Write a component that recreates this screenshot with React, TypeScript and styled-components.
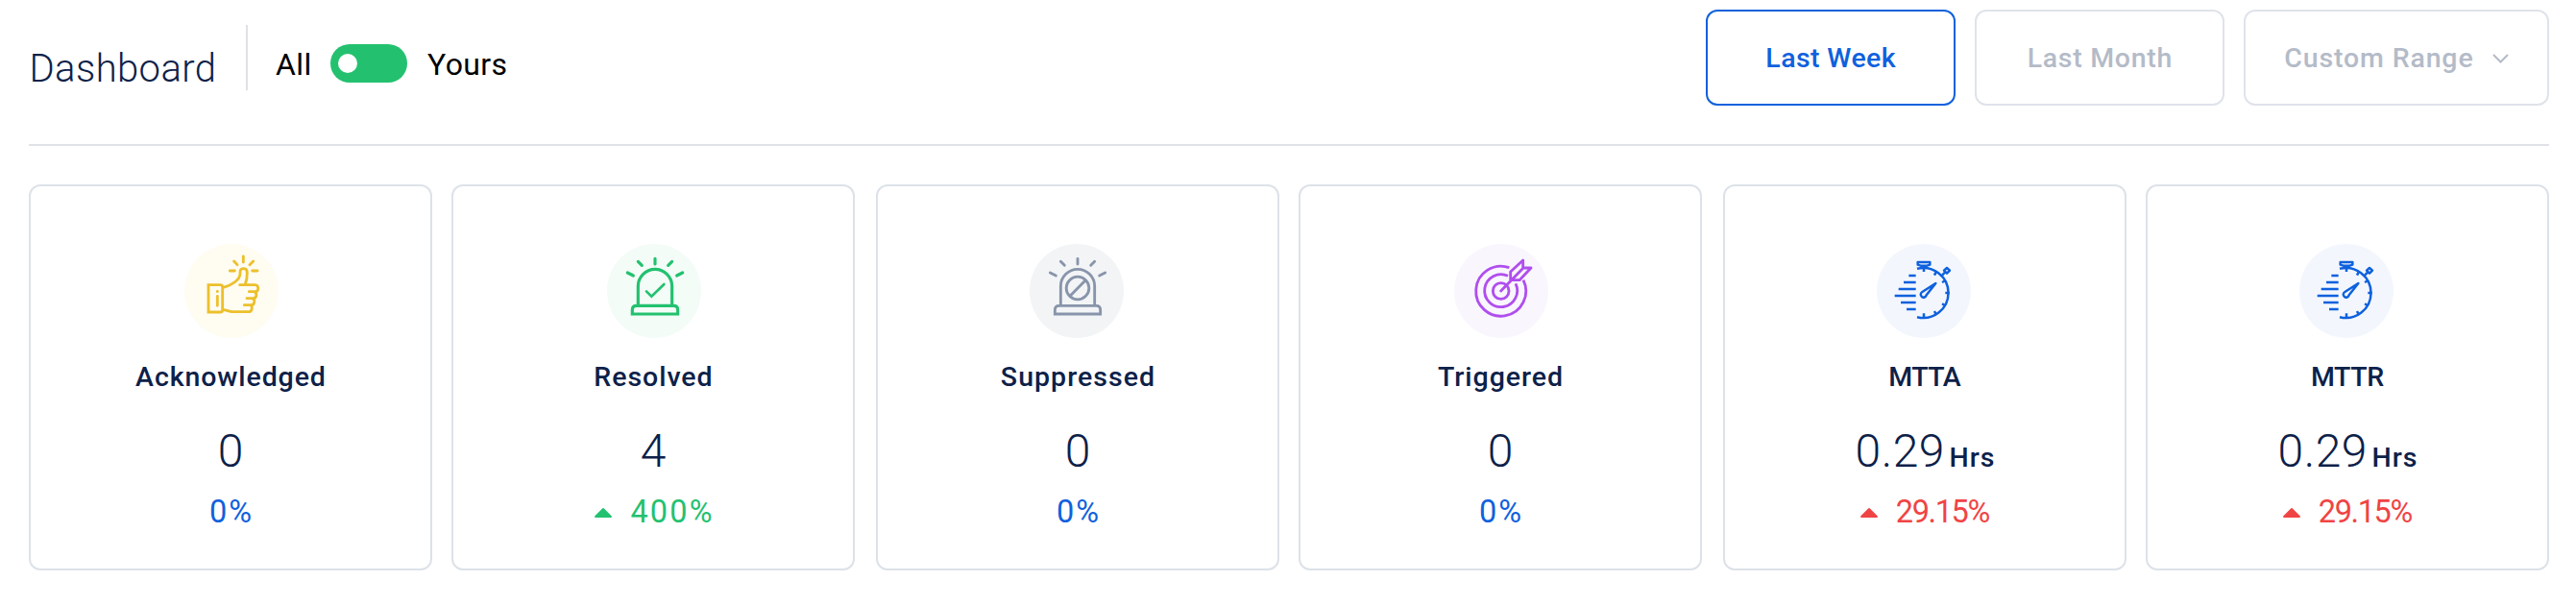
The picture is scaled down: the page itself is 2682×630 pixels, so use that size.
import React from "react";
import styled, { createGlobalStyle } from "styled-components";

const GlobalStyle = createGlobalStyle`
  * { box-sizing: border-box; }
  body { margin: 0; background: #fff; font-family: Roboto, "Liberation Sans", sans-serif; }
`;

const Page = styled.main`
  height: 630px;
  padding: 0 28px 0 30px;
`;

const Header = styled.header`
  display: flex;
  justify-content: space-between;
  align-items: flex-start;
  height: 152px;
  border-bottom: 2px solid #dfe3e8;
`;

const Scope = styled.div`
  display: flex;
  padding-top: 26px;
`;

const Title = styled.h1`
  margin: 0;
  width: 226px;
  padding: 23px 0 0 0.5px;
  font-size: 40px;
  line-height: 46px;
  font-weight: 300;
  letter-spacing: 0.4px;
  color: #0d2149;
`;

const Divider = styled.div`
  width: 2px;
  height: 68px;
  background: #dfe1e5;
`;

const ScopeLabel = styled.span`
  margin-top: 22px;
  font-size: 32px;
  line-height: 38px;
  letter-spacing: 0.4px;
  color: #000;
`;

const ScopeSwitch = styled.div`
  display: flex;
  align-items: flex-start;
  padding-left: 29px;
`;

const Toggle = styled.button`
  display: flex;
  align-items: center;
  width: 80px;
  height: 40px;
  margin: 20px 21px 0 19.4px;
  padding: 0 8px;
  border: 0;
  border-radius: 20px;
  background: #23c16f;
`;

const Knob = styled.span`
  width: 20px;
  height: 20px;
  border-radius: 50%;
  background: #fff;
`;

const Ranges = styled.div`
  display: flex;
  gap: 20px;
  padding-top: 10px;
`;

const RangeButton = styled.button<{ $active?: boolean; $width: number }>`
  display: flex;
  align-items: center;
  justify-content: center;
  gap: 20px;
  width: ${(p) => p.$width}px;
  height: 100px;
  padding: 2px 0 0;
  border: 2px solid ${(p) => (p.$active ? "#0f61dd" : "#dfe3ea")};
  border-radius: 12px;
  background: #fff;
  color: ${(p) => (p.$active ? "#0f61dd" : "#b4bbc8")};
  font: 500 28.5px/34px Roboto, sans-serif;
`;

const Cards = styled.section`
  display: grid;
  grid-template-columns: 420px 422px 420px 422px 420px 420px;
  column-gap: 20px;
  margin-top: 40px;
`;

const Card = styled.article`
  display: flex;
  flex-direction: column;
  align-items: center;
  width: 420px;
  height: 402px;
  padding-top: 60px;
  border: 2px solid #dde2e9;
  border-radius: 12px;
`;

const IconCircle = styled.div<{ $bg: string; $color: string; $shift: number }>`
  width: 98px;
  height: 98px;
  margin-left: ${(p) => p.$shift * 2}px;
  border-radius: 50%;
  background: ${(p) => p.$bg};
  color: ${(p) => p.$color};
`;

const IconSvg = styled.svg`
  display: block;
  width: 98px;
  height: 98px;
  fill: none;
  stroke: currentColor;
  stroke-linejoin: round;
`;

const CardTitle = styled.h2`
  margin: 24px 0 0;
  font-size: 28.5px;
  line-height: 34px;
  font-weight: 500;
  color: #0d2149;
`;

const Value = styled.div`
  display: flex;
  align-items: baseline;
  gap: 5px;
  height: 56px;
  margin-top: 32px;
  font-size: 48px;
  line-height: 56px;
  font-weight: 300;
  color: #0d2149;
`;

const Unit = styled.span`
  font-size: 28.5px;
  line-height: 34px;
  font-weight: 500;
`;

const Change = styled.div<{ $color: string }>`
  display: flex;
  align-items: center;
  gap: 18px;
  margin-top: 16px;
  font-size: 32.5px;
  line-height: 38px;
  color: ${(p) => p.$color};
`;

const Spaced = styled.span<{ $spacing: number }>`
  letter-spacing: ${(p) => p.$spacing}px;
  margin-right: ${(p) => -p.$spacing}px;
`;

const ThumbIcon = () => (
  <IconSvg viewBox="66 42 294 294" strokeWidth="8.5" strokeLinecap="round">
    <path d="M141 170H178Q185 170 185 177V248Q185 255 178 255H141Z" strokeLinejoin="miter" />
    <path d="M169 190v1M169 205v30" />
    <path d="M250 81v18M221 96l10 11M281 96l-11 11M208 126h15M278 126h16" />
    <path d="M187 178C216 170 240 154 240 134V129C240 115 262 115 262 131C262 146 260 158 256 168" />
    <path d="M239 170H287C300 170 299 191 287 191H268M283 191C295 195 292 212 280 212H261M278 212C288 216 286 233 274 233H253M274 233C280 243 276 254 266 254H213L187 247" />
  </IconSvg>
);

const SirenBody = () => (
  <>
    <path d="M163 233V174A53 53 0 0 1 269 174V233" />
    <path d="M145 261V248Q145 235 158 235H274Q287 235 287 248V261Z" strokeLinejoin="miter" />
    <path d="M216 88v17M163 97l12 12M269 97l-12 12M130 132l18 9M302 132l-18 9" />
  </>
);

const ResolvedIcon = () => (
  <IconSvg viewBox="66 42 294 294" strokeWidth="9.5" strokeLinecap="round">
    <SirenBody />
    <path d="M189 190L205 206L244 168" strokeWidth="8" strokeLinejoin="miter" />
  </IconSvg>
);

const SuppressedIcon = () => (
  <IconSvg viewBox="66 42 294 294" strokeWidth="8.5" strokeLinecap="round">
    <SirenBody />
    <circle cx="216" cy="180" r="35.5" />
    <path d="M192 205L240 156" />
  </IconSvg>
);

const TargetIcon = () => (
  <IconSvg viewBox="72 42 294 294" strokeWidth="8.5" strokeLinecap="butt">
    <path d="M244 116A78 78 0 1 0 288 155" />
    <path d="M240 142A51 51 0 1 0 264 166" />
    <circle cx="218" cy="189" r="25" />
    <path d="M218 189L288 117M248 155V129L287 93V117H312L276 155Z" strokeLinecap="round" />
  </IconSvg>
);

const StopwatchIcon = () => (
  <IconSvg viewBox="72 42 294 294" strokeWidth="7.5" strokeLinecap="butt">
    <path d="M198 119.5A78 78 0 1 1 198 270.5" />
    <path d="M219 112v17M219 271v-12M299 195h-13M257 130l-5 10M286 157l-10 5M286 234l-10 -5M257 262l-5 -10" />
    <path d="M200 99H238V107L229 110H209L200 107Z" />
    <path d="M291 117l9 8l-9 9l-9 -9zM285 131l-9 9" />
    <path d="M256 165L227 202A9 9 0 1 1 214 192Z" />
    <path d="M172 141h22M156 162h38M140 183h54M128 204h66M147 225h47M165 246h29" />
  </IconSvg>
);

type Metric = {
  title: string;
  titleSpacing: number;
  value: string;
  unit?: string;
  change: string;
  changeSpacing: number;
  rising?: boolean;
  tone: string;
  bg: string;
  color: string;
  shift: number;
  Icon: React.FC;
};

const metrics: Metric[] = [
  { title: "Acknowledged", titleSpacing: 0.9, value: "0", change: "0%", changeSpacing: 1.9, tone: "#0f61dd", bg: "#fffcf2", color: "#ecc02c", shift: 1, Icon: ThumbIcon },
  { title: "Resolved", titleSpacing: 0.95, value: "4", change: "400%", changeSpacing: 2.2, rising: true, tone: "#23c16f", bg: "#f3fcf7", color: "#23c16f", shift: 1, Icon: ResolvedIcon },
  { title: "Suppressed", titleSpacing: 1.05, value: "0", change: "0%", changeSpacing: 1.9, tone: "#0f61dd", bg: "#f2f4f6", color: "#8894aa", shift: -1, Icon: SuppressedIcon },
  { title: "Triggered", titleSpacing: 0.95, value: "0", change: "0%", changeSpacing: 1.9, tone: "#0f61dd", bg: "#f9f6fe", color: "#b04eee", shift: 1, Icon: TargetIcon },
  { title: "MTTA", titleSpacing: -0.6, value: "0.29", unit: "Hrs", change: "29.15%", changeSpacing: -1.4, rising: true, tone: "#f04444", bg: "#f3f7fd", color: "#0f61dd", shift: -1, Icon: StopwatchIcon },
  { title: "MTTR", titleSpacing: -0.4, value: "0.29", unit: "Hrs", change: "29.15%", changeSpacing: -1.4, rising: true, tone: "#f04444", bg: "#f3f7fd", color: "#0f61dd", shift: -1, Icon: StopwatchIcon },
];

const RisingMark = () => (
  <svg width="20" height="11" viewBox="0 0 20 11">
    <path d="M2 10L10 2L18 10Z" fill="currentColor" stroke="currentColor" strokeWidth="1.8" strokeLinejoin="round" />
  </svg>
);

export default function App() {
  return (
    <>
      <GlobalStyle />
      <Page>
        <Header>
          <Scope>
            <Title>Dashboard</Title>
            <Divider />
            <ScopeSwitch>
              <ScopeLabel>All</ScopeLabel>
              <Toggle aria-label="Show yours"><Knob /></Toggle>
              <ScopeLabel>Yours</ScopeLabel>
            </ScopeSwitch>
          </Scope>
          <Ranges>
            <RangeButton $active $width={260}><Spaced $spacing={0.4}>Last Week</Spaced></RangeButton>
            <RangeButton $width={260}><Spaced $spacing={0.7}>Last Month</Spaced></RangeButton>
            <RangeButton $width={318}>
              <Spaced $spacing={0.85}>Custom Range</Spaced>
              <svg width="17" height="10" viewBox="0 0 17 10" fill="none" stroke="#b4bbc8" strokeWidth="2"><path d="M1 1l7.5 7.5L16 1" /></svg>
            </RangeButton>
          </Ranges>
        </Header>
        <Cards>
          {metrics.map(({ title, titleSpacing, value, unit, change, changeSpacing, rising, tone, bg, color, shift, Icon }) => (
            <Card key={title}>
              <IconCircle $bg={bg} $color={color} $shift={shift}><Icon /></IconCircle>
              <CardTitle><Spaced $spacing={titleSpacing}>{title}</Spaced></CardTitle>
              <Value>
                <Spaced $spacing={0.5}>{value}</Spaced>
                {unit && <Unit><Spaced $spacing={1}>{unit}</Spaced></Unit>}
              </Value>
              <Change $color={tone}>
                {rising && <RisingMark />}
                <Spaced $spacing={changeSpacing}>{change}</Spaced>
              </Change>
            </Card>
          ))}
        </Cards>
      </Page>
    </>
  );
}
